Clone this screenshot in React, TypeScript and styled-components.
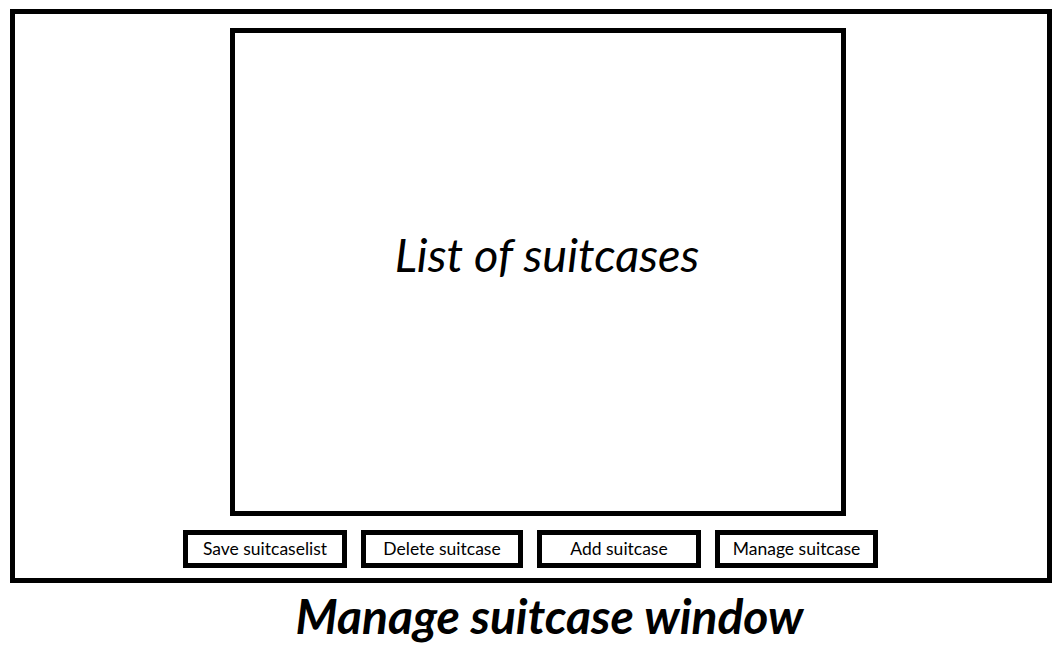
import React, { FC } from "react";
import styled, { createGlobalStyle } from "styled-components";

const GlobalStyle = createGlobalStyle`
    html, body {
        margin: 0;
        padding: 0;
        background: #fff;
        width: 1063px;
        height: 652px;
        overflow: hidden;
    }
    body {
        font-family: Lato, "Open Sans", sans-serif;
        color: #000;
    }
`;

const Page = styled.div`
    padding: 9px 0 0 10px;
`;

const Frame = styled.div`
    box-sizing: border-box;
    width: 1042px;
    height: 574px;
    border: 5px solid #000;
    padding: 14px 0 0 0;
    display: flex;
    flex-direction: column;
`;

const ListBox = styled.div`
    box-sizing: border-box;
    width: 616px;
    height: 488px;
    margin-left: 215px;
    border: 5px solid #000;
    display: flex;
    align-items: center;
    justify-content: center;
    font-style: italic;
    font-size: 47px;
    padding-bottom: 36px;
    padding-left: 18px;
`;

const ButtonRow = styled.div`
    display: flex;
    justify-content: center;
    gap: 14px;
    margin-top: 14px;
    padding-right: 1px;
`;

const Button = styled.div<{ $w: number }>`
    box-sizing: border-box;
    width: ${(p) => p.$w}px;
    height: 38px;
    border: 5px solid #000;
    display: flex;
    align-items: center;
    justify-content: center;
    font-size: 17.5px;
    padding-bottom: 1px;
`;

const Title = styled.div`
    text-align: center;
    padding-left: 26px;
    margin-top: 5px;
    font-weight: bold;
    font-style: italic;
    font-size: 48px;
    line-height: 56px;
`;

const buttons = [
    { label: "Save suitcaselist", w: 164 },
    { label: "Delete suitcase", w: 162 },
    { label: "Add suitcase", w: 164 },
    { label: "Manage suitcase", w: 163 },
];

const App: FC = () => {
    return <Page>
        <GlobalStyle />
        <Frame>
            <ListBox>List of suitcases</ListBox>
            <ButtonRow>
                {buttons.map((b, i) => (
                    <Button key={i} $w={b.w}>{b.label}</Button>
                ))}
            </ButtonRow>
        </Frame>
        <Title>Manage suitcase window</Title>
    </Page>;
}

export default App;
